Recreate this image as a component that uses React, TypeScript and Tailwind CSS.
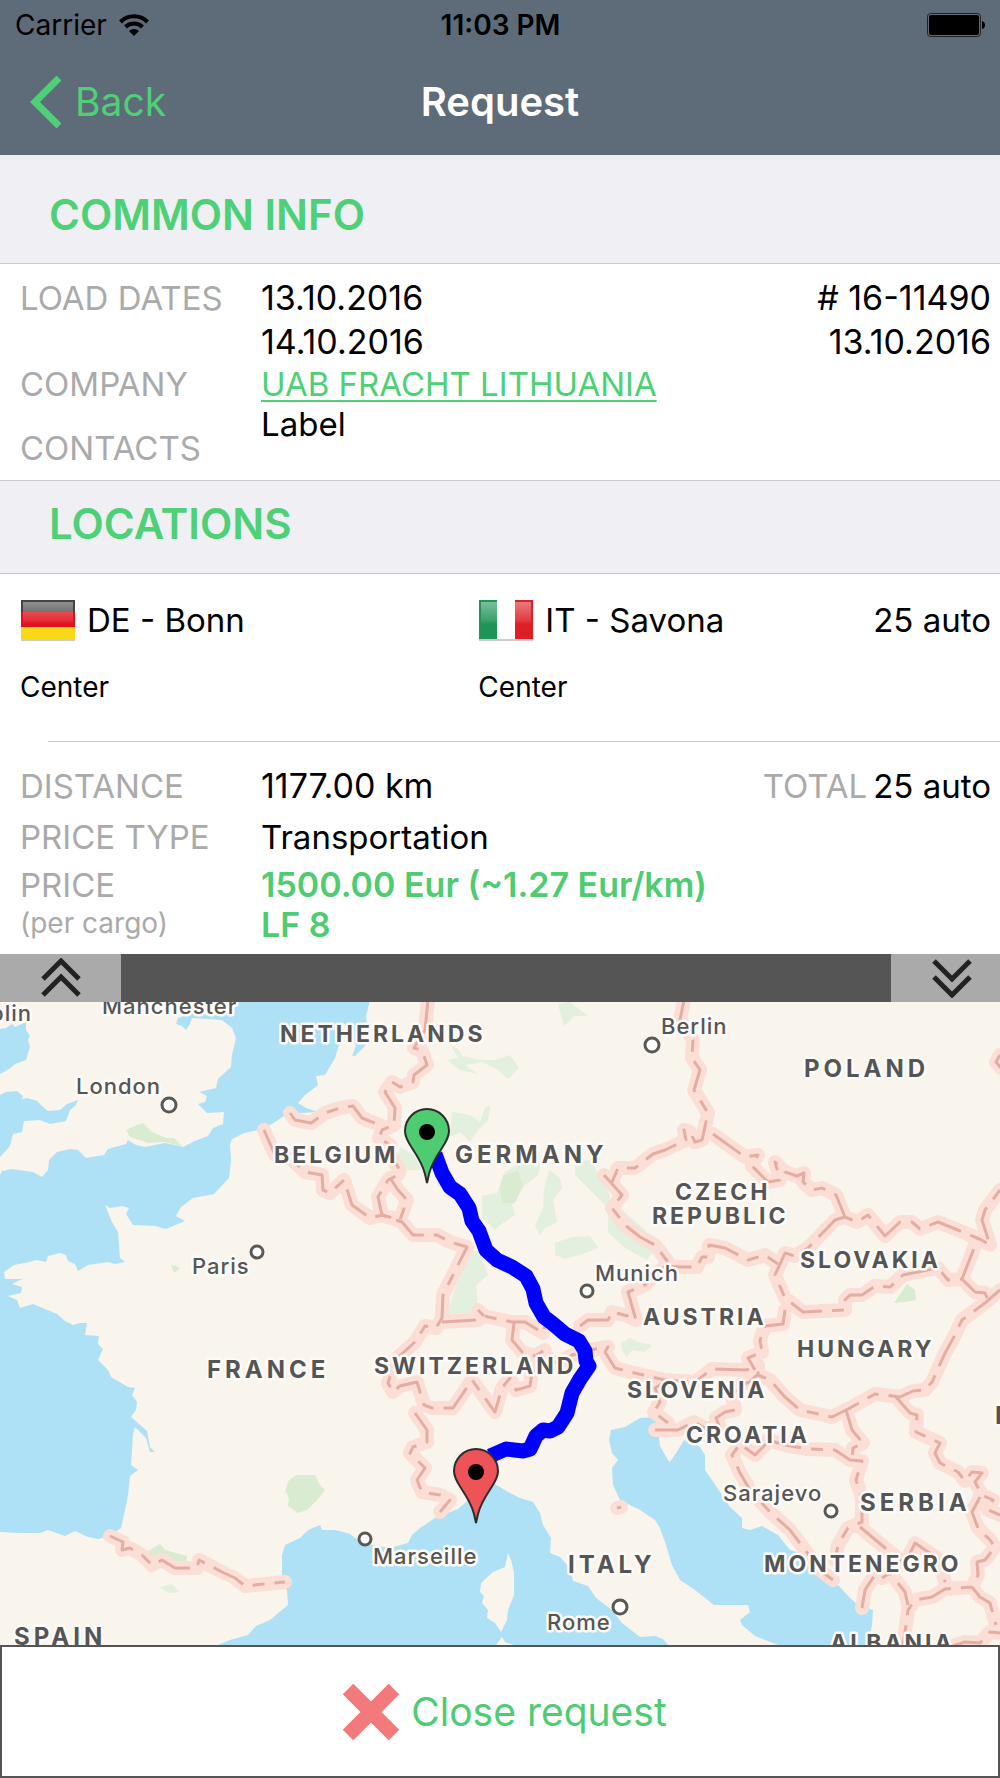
import type { ReactNode } from 'react';

// Map data, in the map's own coordinate space (x 0-1000, y 1002-1645)
const LAND = [
  // Great Britain
  '0,1000 0,1029 6,1028 12,1024 15,1027 26,1022 26,1030 30,1036 28,1040 30,1047 28,1053 26,1060 15,1064 9,1069 0,1074 0,1095 6,1092 17,1091 23,1096 22,1099 27,1098 37,1101 42,1106 48,1111 60,1110 67,1104 78,1100 76,1105 70,1110 66,1121 50,1124 40,1120 24,1121 22,1132 13,1134 10,1146 0,1157 0,1175 2,1171 12,1169 33,1172 42,1177 48,1170 49,1160 57,1152 70,1149 78,1150 86,1158 104,1155 108,1149 126,1144 128,1140 136,1145 145,1147 165,1143 183,1147 195,1141 208,1136 213,1128 223,1124 224,1112 207,1113 198,1104 205,1102 207,1096 199,1092 216,1088 218,1079 231,1067 232,1055 236,1038 232,1028 222,1020 192,1018 190,1024 186,1030 182,1026 176,1024 178,1018 190,1014 237,1002',
  // Continent
  '370,1000 366,1016 368,1030 366,1045 355,1056 352,1056 356,1046 349,1030 343,1022 343,1032 339,1045 335,1058 325,1075 316,1076 318,1085 305,1095 298,1103 306,1108 318,1112 300,1113 287,1114 275,1122 263,1129 244,1133 232,1139 230,1145 231,1160 229,1178 214,1194 193,1198 181,1207 176,1216 185,1221 173,1226 166,1229 155,1226 133,1225 126,1214 129,1208 122,1206 110,1208 105,1205 112,1222 118,1232 120,1258 125,1262 115,1264 108,1262 95,1264 88,1265 78,1271 75,1264 68,1261 66,1255 60,1253 48,1256 46,1262 36,1260 30,1262 14,1265 4,1272 5,1279 22,1279 12,1284 22,1287 21,1293 8,1296 17,1300 20,1308 33,1304 57,1314 65,1321 73,1325 80,1323 87,1323 85,1335 99,1336 98,1344 103,1349 98,1360 108,1370 111,1377 128,1387 135,1388 132,1395 137,1402 136,1410 131,1417 147,1431 150,1447 155,1452 150,1452 146,1438 135,1427 133,1435 131,1465 138,1470 130,1476 128,1495 124,1515 121,1528 110,1536 98,1539 88,1537 75,1531 65,1536 48,1530 40,1533 20,1533 0,1532 0,1645 218,1645 230,1640 248,1635 256,1626 270,1620 288,1605 287,1590 282,1585 282,1555 285,1545 300,1538 308,1530 320,1525 322,1530 335,1530 343,1532 350,1534 358,1540 372,1545 390,1548 408,1543 412,1535 420,1528 435,1518 445,1514 458,1509 466,1502 482,1485 495,1484 508,1492 520,1498 533,1502 540,1513 543,1525 551,1538 550,1553 560,1557 570,1568 573,1581 588,1586 596,1598 612,1610 622,1623 640,1637 655,1636 663,1639 668,1645 778,1645 755,1636 742,1625 740,1620 750,1612 748,1605 714,1605 695,1590 680,1580 672,1565 666,1545 660,1528 655,1520 640,1510 620,1500 613,1485 612,1468 618,1460 612,1453 609,1440 611,1430 625,1427 640,1418 655,1417 658,1430 660,1446 668,1460 670,1462 678,1450 684,1440 700,1447 705,1455 705,1470 712,1480 720,1492 730,1507 742,1518 742,1528 750,1530 762,1526 778,1535 790,1550 800,1553 812,1570 825,1580 838,1585 850,1598 858,1605 873,1610 872,1625 868,1645 1000,1645 1000,1000',
  // Corsica and the tip of Sardinia
  '508,1553 511,1560 514,1572 514,1595 508,1610 507,1620 501,1632 495,1623 487,1618 488,1610 482,1603 484,1596 480,1592 481,1583 493,1572 505,1567',
  '502,1637 505,1642 514,1645 496,1645',
];

const FORESTS = [
  '126,1130 135,1126 143,1123 152,1132 166,1138 174,1138 183,1147 165,1142 148,1143 130,1137',
  '171,1265 176,1266 180,1268 174,1273',
  '289,1480 297,1475 315,1475 320,1485 325,1490 317,1500 307,1510 298,1513 288,1506 289,1498 285,1491',
  '148,1551 160,1544 165,1550 187,1556 186,1568 176,1574 165,1565 152,1562',
  '907,1284 915,1290 916,1300 905,1302 894,1303 901,1293',
  '503,1175 518,1171 523,1185 515,1203 502,1203 500,1187',
];

const WOODS = [
  '450,1044 459,1050 462,1056 480,1060 496,1060 510,1055 519,1068 508,1079 498,1070 482,1062 465,1065 478,1074 460,1070 447,1060 458,1058',
  '558,1004 570,1002 588,1016 574,1016 564,1026',
  '452,1112 470,1115 480,1122 485,1108 490,1106 488,1120 478,1130 470,1142 460,1132 450,1137',
  '400,1147 414,1155 422,1170 408,1170 398,1158',
  '482,1196 497,1193 505,1172 525,1160 541,1163 538,1175 525,1185 512,1205 515,1215 500,1225 495,1230 482,1217',
  '549,1170 560,1178 562,1188 553,1200 557,1222 545,1228 540,1235 535,1226 543,1208 544,1190',
  '555,1243 572,1237 590,1236 598,1248 585,1253 565,1259 555,1255',
  '575,1162 592,1160 598,1175 610,1195 608,1208 590,1190 575,1175',
  '608,1205 622,1210 645,1230 655,1248 647,1260 625,1248 608,1232',
  '470,1250 480,1252 488,1275 476,1285 478,1310 465,1318 447,1315 456,1285',
  '621,1343 630,1338 638,1342 652,1345 645,1352 632,1350 627,1357 622,1350',
  '160,1587 172,1584 180,1592 168,1593',
];

const BORDERS = [
  '428,1000 425,1030 414,1048 422,1050 427,1065 414,1075 413,1082 400,1087 392,1082 385,1092 395,1108 394,1125 382,1130 379,1138 390,1145 388,1152 400,1170 398,1175 388,1180 378,1197 382,1215 400,1220 407,1200 398,1190 390,1178',
  '290,1113 295,1120 311,1123 325,1113 340,1108 353,1106 362,1118 382,1126',
  '264,1130 275,1155 290,1158 305,1172 322,1175 323,1190 330,1193 344,1180 352,1205 370,1218 382,1215 402,1222 413,1235 437,1235 450,1242 467,1247 443,1295 442,1318 436,1328 425,1326 415,1342 395,1360 388,1383 393,1392 400,1386 417,1382 424,1405 432,1408 453,1408 472,1380 495,1412 502,1388 510,1378 516,1390 530,1386 532,1372 545,1365',
  '442,1322 478,1320 484,1316 512,1322 525,1322 543,1333 546,1322',
  '514,1323 512,1340 522,1352 535,1356 545,1350 548,1362 560,1362 572,1355 590,1350 608,1347 605,1352 615,1368 630,1372 665,1380 695,1382 712,1369 745,1370 758,1368',
  '478,1310 484,1316',
  '580,1326 588,1320 608,1320 612,1312 628,1316 636,1320 628,1292 645,1285 665,1266 680,1267 697,1267 702,1257 708,1257 709,1245 725,1248 748,1260 765,1255 778,1264',
  '415,1413 427,1430 427,1442 413,1447 410,1453 425,1468 417,1480 422,1492 440,1495 450,1500 440,1512',
  '684,1000 680,1020 693,1040 692,1058 700,1070 694,1090 708,1113 702,1140 695,1142 690,1132 684,1130 686,1140 665,1150 653,1154 635,1168 618,1168 612,1182 M604,1175 622,1195 612,1208 625,1225 640,1237 655,1245 668,1262',
  '713,1134 745,1157 758,1155 752,1166 768,1182 780,1180 775,1162 785,1172 797,1176 804,1173 803,1182 812,1190 822,1188 836,1195 845,1217 857,1222 868,1215 885,1236 900,1222 912,1222 920,1229 938,1222 958,1230 977,1238',
  '845,1217 835,1220 808,1248 795,1256 785,1253 775,1275 785,1298 803,1312 845,1310 845,1300 850,1295 862,1295 875,1286 890,1287 903,1275 938,1268 948,1280 962,1279 978,1238 990,1245 982,1220 985,1210 1000,1190',
  '962,1279 975,1292 985,1293 988,1300',
  '1000,1290 985,1303 962,1320 955,1335 945,1353 932,1382 925,1390 913,1391 900,1397 875,1394 850,1408 832,1417 800,1410 785,1397 770,1380 758,1375 758,1365',
  '785,1310 783,1324 765,1326 760,1340 762,1352 748,1358 755,1370',
  '655,1430 678,1430 694,1422 705,1428 720,1428 716,1418 725,1412 735,1410 732,1395 740,1385 750,1382 757,1375',
  '665,1382 655,1388 660,1402 654,1412 668,1423',
  '770,1440 755,1455 740,1444 732,1455 740,1473 750,1490 770,1512 790,1530 805,1550 820,1570 833,1580',
  '768,1440 785,1445 808,1449 835,1450 850,1460 862,1461 856,1480 862,1498 862,1522 848,1528 838,1545 835,1560',
  '846,1410 852,1430 863,1443 853,1448 852,1460',
  '860,1527 890,1552 905,1564 915,1543 940,1560 945,1582',
  '896,1397 910,1413 917,1415 916,1432 940,1443 935,1453 940,1463 958,1472 965,1481 972,1472 982,1473 975,1482 982,1495 993,1500 988,1510 1000,1515',
  '980,1497 972,1512 978,1528 990,1540 995,1547 985,1560 977,1562 978,1575 972,1587 945,1589 932,1597 915,1600 908,1610 906,1625 903,1645',
  '862,1608 865,1590 875,1575 882,1578 890,1573 905,1592 908,1605',
  '972,1587 980,1597 990,1603 996,1625',
  '950,1647 965,1642 980,1643 990,1632 1000,1633',
  '110,1536 123,1542 122,1550 130,1548 142,1555 152,1565 162,1560 175,1568 197,1568 199,1560 222,1572 235,1578 245,1586 285,1582',
  '1000,1055 996,1062 1001,1068',
  '617,1508 621,1507',
];

const ROUTE =
  '435,1154 442,1173 450,1187 460,1194 469,1208 472,1221 479,1231 486,1250 497,1260 512,1267 526,1276 533,1289 536,1303 544,1317 552,1323 565,1334 579,1341 585,1351 586,1361 589,1366 580,1379 572,1393 567,1413 558,1427 550,1431 543,1430 536,1436 530,1449 523,1451 506,1449 490,1456';

const COUNTRIES_LARGE: [string, number, number][] = [
  ['GERMANY', 455, 1163],
  ['POLAND', 804, 1077],
  ['SERBIA', 860, 1511],
  ['ITALY', 568, 1573],
  ['SPAIN', 14, 1645],
  ['FRANCE', 207, 1378],
  ['ROMANIA', 995, 1424],
];

const COUNTRIES: [string, number, number][] = [
  ['NETHERLANDS', 280, 1042],
  ['BELGIUM', 274, 1163],
  ['CZECH', 675, 1200],
  ['REPUBLIC', 652, 1224],
  ['SLOVAKIA', 800, 1268],
  ['AUSTRIA', 643, 1325],
  ['HUNGARY', 797, 1357],
  ['SLOVENIA', 627, 1398],
  ['CROATIA', 686, 1443],
  ['MONTENEGRO', 764, 1572],
  ['ALBANIA', 830, 1651],
  ['SWITZERLAND', 374, 1374],
];

const CITIES: [string, number, number][] = [
  ['Dublin', -41, 1021],
  ['Manchester', 102, 1014],
  ['London', 76, 1094],
  ['Paris', 192, 1274],
  ['Berlin', 661, 1034],
  ['Munich', 595, 1281],
  ['Marseille', 373, 1564],
  ['Rome', 547, 1630],
  ['Sarajevo', 723, 1501],
];

const DOTS = [
  [169, 1105, 7],
  [257, 1252, 6],
  [652, 1045, 7],
  [587, 1291, 6],
  [365, 1539, 6],
  [620, 1607, 7],
  [831, 1511, 6],
];

const Pin = ({ x, y, color }: { x: number; y: number; color: string }) => (
  <g transform={`translate(${x} ${y})`}>
    <path
      d="M0 50L-2 41C-4 33-9 24-15 15C-19 9-22 4-22-2A22 22 0 0 1 22-2C22 4 19 9 15 15C9 24 4 33 2 41Z"
      fill={color}
      stroke="#2c2c2c"
      strokeWidth="2"
    />
    <circle r="8" cy="-1" fill="#000" />
  </g>
);

const RouteMap = () => (
  <svg
    viewBox="0 1002 1000 643"
    className="block w-full bg-[#aee1f6] font-['Inter',sans-serif]"
    role="img"
    aria-label="Route from Bonn to Savona"
  >
    {LAND.map((p) => <polygon key={p} points={p} fill="#f9f4ec" />)}
    {WOODS.map((p) => <polygon key={p} points={p} fill="#e3efdf" />)}
    {FORESTS.map((p) => <polygon key={p} points={p} fill="#d9ebd0" />)}

    {/* Borders: soft band first, dashes on top */}
    <g fill="none" strokeLinejoin="round">
      {BORDERS.map((p) => (
        <path key={p} d={`M${p}`} stroke="#fbdfd7" strokeWidth="14" strokeLinecap="round" />
      ))}
      {BORDERS.map((p) => (
        <path key={p} d={`M${p}`} stroke="#e5ada1" strokeWidth="3" strokeDasharray="34 10 12 10" />
      ))}
    </g>

    <g fill="#fff" stroke="#5a5855" strokeWidth="3">
      {DOTS.map(([x, y, r]) => <circle key={x} cx={x} cy={y} r={r} />)}
    </g>

    <g fill="#555" stroke="#fdfbf8" strokeWidth="5" strokeLinejoin="round" paintOrder="stroke">
      {COUNTRIES_LARGE.map(([name, x, y]) => (
        <text key={name} x={x} y={y} className="text-[24px] font-bold tracking-[4px]">{name}</text>
      ))}
      {COUNTRIES.map(([name, x, y]) => (
        <text key={name} x={x} y={y} className="text-[23px] font-bold tracking-[3px]">{name}</text>
      ))}
      {CITIES.map(([name, x, y]) => (
        <text key={name} x={x} y={y} className="text-[22px] font-medium tracking-[1px]">{name}</text>
      ))}
    </g>

    <polyline points={ROUTE} fill="none" stroke="#00f" strokeWidth="15" strokeLinejoin="round" />
    <Pin x={427} y={1133} color="#4fcc72" />
    <Pin x={476} y={1473} color="#ee5357" />
  </svg>
);

const Flag = ({ country }: { country: 'de' | 'it' }) => (
  <svg viewBox="0 0 56 42" className="h-[42px] w-14 shrink-0" aria-hidden="true">
    <defs>
      <linearGradient id={`gloss-${country}`} x2="0" y2="1">
        <stop offset="0" stopColor="#fff" stopOpacity="0.4" />
        <stop offset="0.5" stopColor="#fff" stopOpacity="0.12" />
        <stop offset="0.6" stopColor="#fff" stopOpacity="0" />
      </linearGradient>
    </defs>
    <rect x="1" y="3" width="54" height="39" fill="#000" opacity="0.2" />
    {country === 'de' ? (
      <>
        <rect x="1" y="1" width="54" height="13" fill="#444" />
        <rect x="1" y="13" width="54" height="15" fill="#e1101a" />
        <rect x="1" y="28" width="54" height="12" fill="#f7d917" />
      </>
    ) : (
      <>
        <rect x="1" y="1" width="18" height="39" fill="#1f9457" />
        <rect x="19" y="1" width="18" height="39" fill="#fff" />
        <rect x="37" y="1" width="18" height="39" fill="#df1f26" />
      </>
    )}
    <rect x="3" y="3" width="50" height="37" fill={`url(#gloss-${country})`} />
  </svg>
);

const SectionTitle = ({ className, children }: { className: string; children: ReactNode }) => (
  <h2 className={`border-b border-[#c8c7cc] bg-[#efeff4] px-[49px] text-[42px] font-semibold leading-[52px] text-[#4ed076] ${className}`}>
    {children}
  </h2>
);

const Chevrons = ({ down }: { down?: boolean }) => (
  <svg viewBox="0 0 40 40" className="h-10 w-10" fill="none" stroke="#222" strokeWidth="5" aria-hidden="true">
    <path d={down ? 'M2 3L20 21L38 3M2 19L20 37L38 19' : 'M2 21L20 3L38 21M2 37L20 19L38 37'} />
  </svg>
);

export default function App() {
  return (
    <div className="flex w-full flex-col bg-white font-['Inter',sans-serif] text-[33px] leading-10 text-black">
      <header className="bg-[#5e6b78]">
        <div className="grid h-[50px] grid-cols-3 items-center pl-[15px] pr-[14px] text-[28px]">
          <div className="flex items-center gap-3">
            <span>Carrier</span>
            <svg viewBox="0 0 30 22" className="h-[22px] w-[30px]" fill="none" stroke="#000" strokeWidth="4" aria-hidden="true">
              <path d="M1.500 8A19 19 0 0 1 28.500 8" />
              <path d="M6.500 13A12 12 0 0 1 23.500 13" />
              <path d="M10 17A7 7 0 0 1 20 17L15 22Z" fill="#000" stroke="none" />
            </svg>
          </div>
          <span className="text-center font-semibold">11:03 PM</span>
          <svg viewBox="0 0 59 25" className="h-[25px] w-[59px] justify-self-end" aria-hidden="true">
            <rect x="0.500" y="0.500" width="53" height="23" rx="3" fill="none" stroke="#222" />
            <rect x="2" y="2" width="50" height="20" rx="2" />
            <path d="M55 8Q58 9 58 12Q58 15 55 16Z" />
          </svg>
        </div>
        <nav className="grid h-[105px] grid-cols-3 items-center px-[30px] pb-[2px] text-[39px]">
          <button type="button" className="flex items-center gap-[14px] text-[#4ed076]">
            <svg viewBox="0 0 31 52" className="h-[52px] w-[31px]" fill="none" stroke="currentColor" strokeWidth="7" aria-hidden="true">
              <path d="M29 2L5 26L29 50" />
            </svg>
            Back
          </button>
          <h1 className="text-center text-[40px] font-semibold text-white">Request</h1>
        </nav>
      </header>

      <SectionTitle className="pb-[22px] pt-[34px]">COMMON INFO</SectionTitle>
      <section className="flex justify-between border-b border-[#c8c7cc] pb-3 pl-5 pr-[9px] pt-[12px]">
        <dl className="grid grid-cols-[241px_auto]">
          <dt className="leading-[44px] text-[#aaa]">LOAD DATES</dt>
          <dd className="text-[34px] leading-[44px]">
            13.10.2016
            <br />
            14.10.2016
          </dd>
          <dt className="text-[#aaa]">COMPANY</dt>
          <dd>
            <a href="#company" className="text-[#4ed076] underline decoration-2 underline-offset-4">UAB FRACHT LITHUANIA</a>
          </dd>
          <dt className="pt-6 text-[#aaa]">CONTACTS</dt>
          <dd>Label</dd>
        </dl>
        <p className="text-right text-[34px] leading-[44px]">
          # 16-11490
          <br />
          13.10.2016
        </p>
      </section>

      <SectionTitle className="pb-[23px] pt-[17px]">LOCATIONS</SectionTitle>
      <section className="grid grid-cols-[47%_1fr_auto] gap-y-[27px] pb-[34px] pl-5 pr-[9px] pt-[26px]">
        <div className="flex h-10 items-center gap-[11px]">
          <Flag country="de" />
          DE - Bonn
        </div>
        <div className="flex h-10 items-center gap-[11px] pl-[2px]">
          <Flag country="it" />
          IT - Savona
        </div>
        <span>25 auto</span>
        <span className="text-[28px]">Center</span>
        <span className="pl-[2px] text-[28px]">Center</span>
      </section>
      <hr className="ml-12 border-[#c8c7cc]" />
      <section className="flex justify-between pb-[9px] pl-5 pr-[9px] pt-6">
        <dl className="grid grid-cols-[241px_auto]">
          <dt className="pb-[11px] text-[#aaa]">DISTANCE</dt>
          <dd className="text-[34px]">1177.00 km</dd>
          <dt className="pb-2 text-[#aaa]">PRICE TYPE</dt>
          <dd>Transportation</dd>
          <dt className="text-[#aaa]">
            PRICE
            <span className="block text-[28px] leading-9">(per cargo)</span>
          </dt>
          <dd className="text-[34px] font-semibold text-[#4ecc72]">
            1500.00 Eur (~1.27 Eur/km)
            <br />
            LF 8
          </dd>
        </dl>
        <p className="flex gap-[6px]">
          <span className="text-[#aaa]">TOTAL</span>
          <span>25 auto</span>
        </p>
      </section>

      <div className="flex h-12 justify-between bg-[#555]">
        <button type="button" aria-label="Scroll up" className="flex w-[121px] items-center justify-center bg-[#aaa]">
          <Chevrons />
        </button>
        <button type="button" aria-label="Scroll down" className="flex w-[109px] items-center justify-center bg-[#aaa] pl-3">
          <Chevrons down />
        </button>
      </div>

      <RouteMap />

      <button
        type="button"
        className="flex h-[133px] w-full items-center justify-center gap-3 border-2 border-[#555] pl-[10px] text-[39px] text-[#4ecc72]"
      >
        <svg viewBox="0 0 56 56" className="size-14" fill="none" stroke="#f37a7c" strokeWidth="15" aria-hidden="true">
          <path d="M5 5L51 51M51 5L5 51" />
        </svg>
        Close request
      </button>
    </div>
  );
}
